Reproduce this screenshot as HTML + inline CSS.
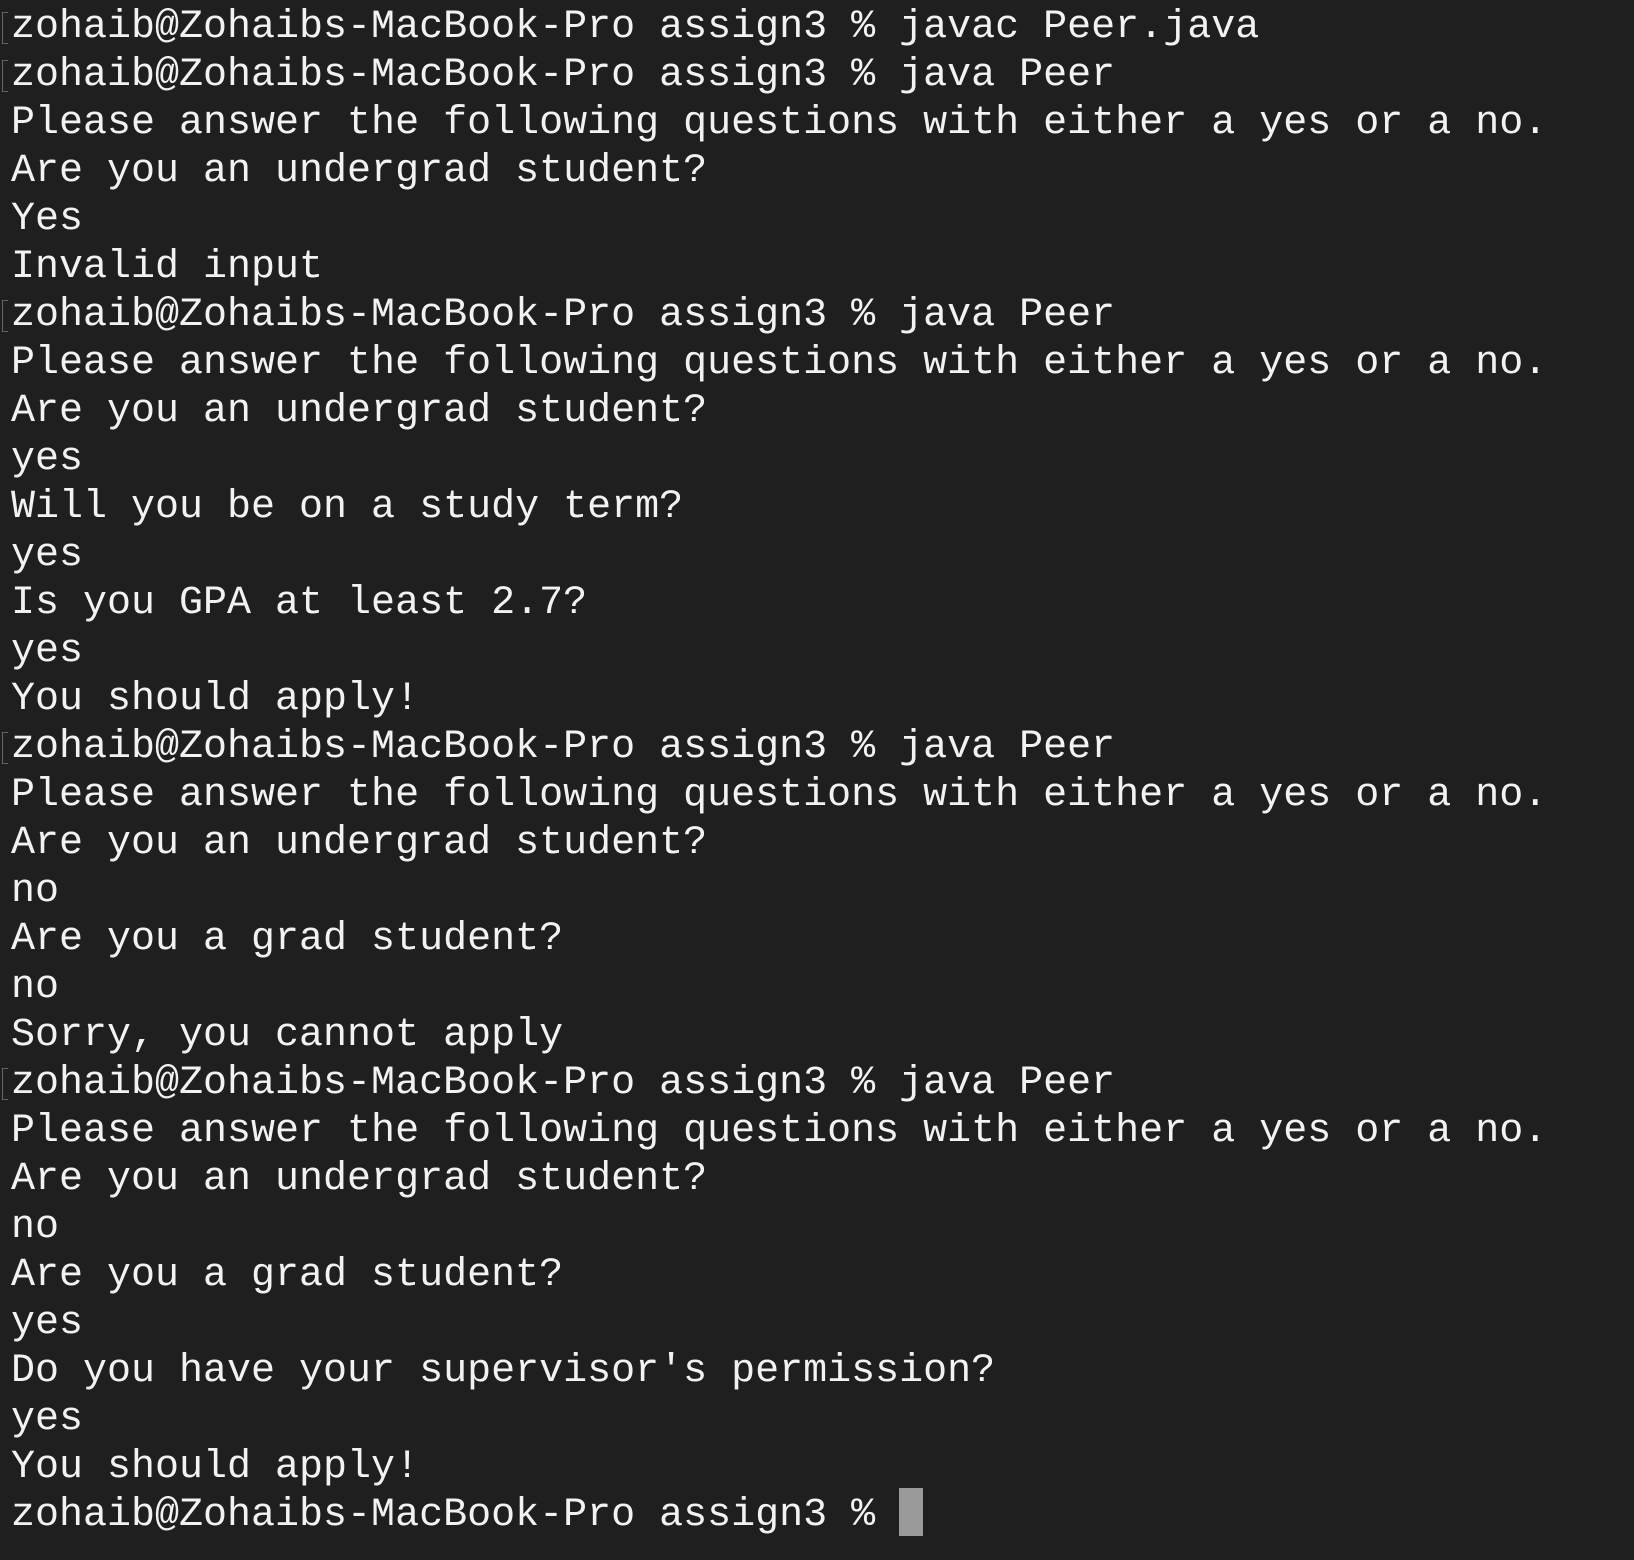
<!DOCTYPE html>
<html><head><meta charset="utf-8"><style>
html,body{margin:0;padding:0;background:#1f1f1f;width:1634px;height:1560px;overflow:hidden}
pre{margin:0;padding:4px 0 0 11px;font-family:"Liberation Mono",monospace;font-size:40px;line-height:48px;color:#f2f2f2;position:relative}
.b{position:absolute;left:2px;width:5px;height:30px;border:1px solid #666;border-right:none}
.cur{display:inline-block;width:24px;height:48px;background:#9a9a9a;vertical-align:top;position:relative;top:-4px}
</style></head><body>
<div class="b" style="top:12px"></div><div class="b" style="top:60px"></div><div class="b" style="top:300px"></div><div class="b" style="top:732px"></div><div class="b" style="top:1068px"></div>
<pre>zohaib@Zohaibs-MacBook-Pro assign3 % javac Peer.java
zohaib@Zohaibs-MacBook-Pro assign3 % java Peer
Please answer the following questions with either a yes or a no.
Are you an undergrad student?
Yes
Invalid input
zohaib@Zohaibs-MacBook-Pro assign3 % java Peer
Please answer the following questions with either a yes or a no.
Are you an undergrad student?
yes
Will you be on a study term?
yes
Is you GPA at least 2.7?
yes
You should apply!
zohaib@Zohaibs-MacBook-Pro assign3 % java Peer
Please answer the following questions with either a yes or a no.
Are you an undergrad student?
no
Are you a grad student?
no
Sorry, you cannot apply
zohaib@Zohaibs-MacBook-Pro assign3 % java Peer
Please answer the following questions with either a yes or a no.
Are you an undergrad student?
no
Are you a grad student?
yes
Do you have your supervisor's permission?
yes
You should apply!
zohaib@Zohaibs-MacBook-Pro assign3 % <span class="cur"></span></pre>
</body></html>
